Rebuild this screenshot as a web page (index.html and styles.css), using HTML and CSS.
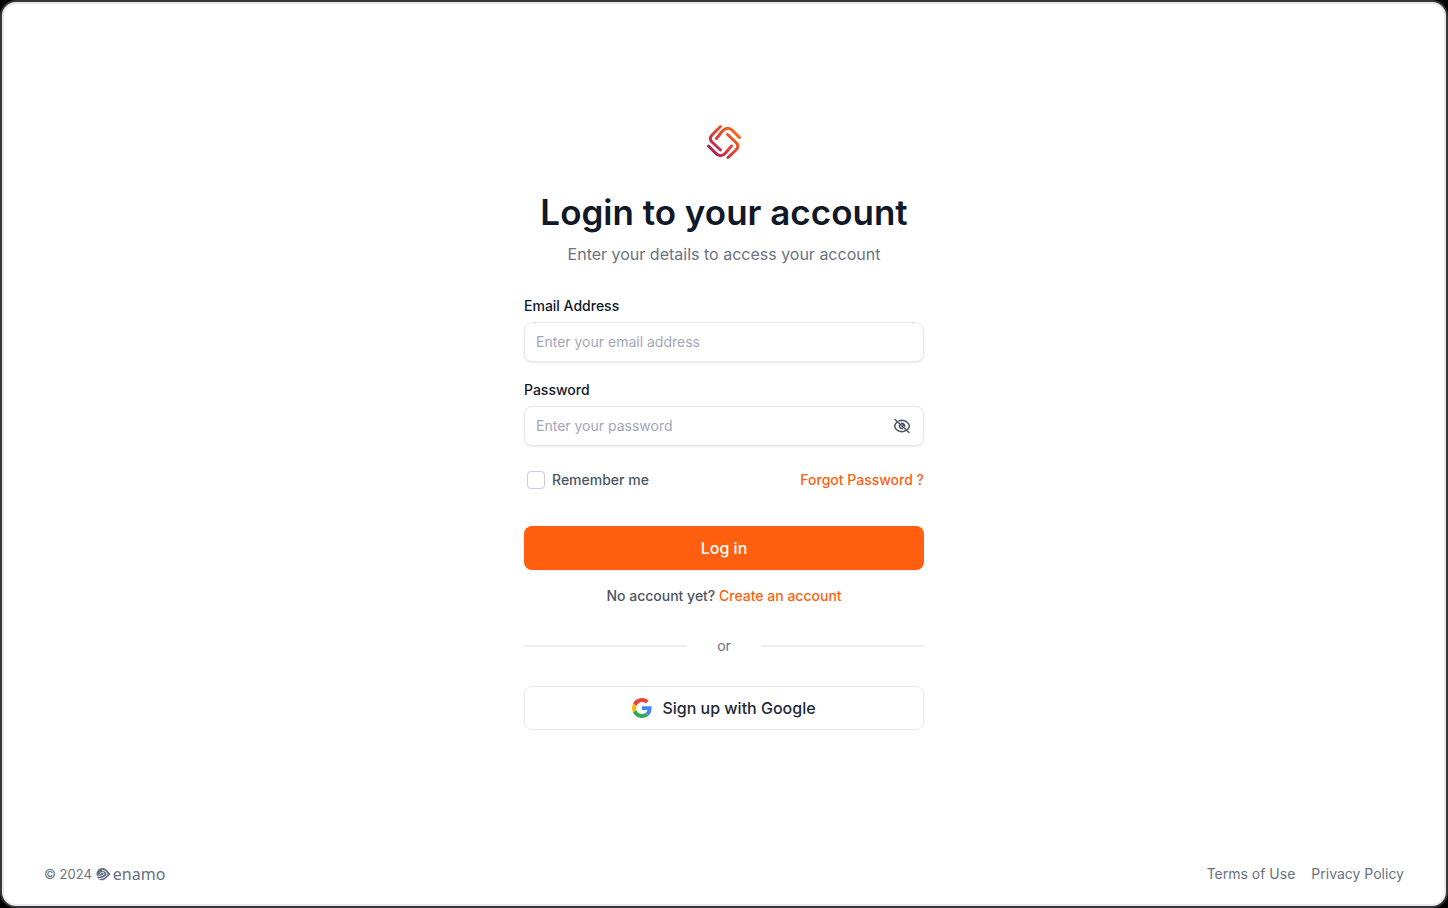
FILE: index.html
```
<!DOCTYPE html>
<html lang="en">
<head>
    <meta charset="UTF-8">
    <meta name="viewport" content="width=device-width, initial-scale=1">
    <title>Login to your account</title>
    <link rel="stylesheet" href="styles.css">
</head>
<body>
<div class="page">
    <main class="login">
        <svg class="logo" viewBox="0 0 40 40" fill="none" stroke="url(#logo-gradient)" stroke-width="3" stroke-linecap="round" stroke-linejoin="round" aria-hidden="true">
            <defs>
                <linearGradient id="logo-gradient" gradientUnits="userSpaceOnUse" x1="6" y1="32" x2="32" y2="8">
                    <stop offset="0" stop-color="#a3195b"/>
                    <stop offset="0.5" stop-color="#dd4238"/>
                    <stop offset="1" stop-color="#ff6610"/>
                </linearGradient>
            </defs>
            <path d="M16.500 4.500 L8 13 Q4.500 16.500 8 20 L16.500 28"/>
            <path d="M12.500 16.500 L18 9.500 Q23.500 3.500 28.500 8.500 L35.500 15.500"/>
            <path d="M23.500 12.500 L31 19.500 Q36.500 24 31.500 28.500 L24 35.500"/>
            <path d="M4.500 24 L11.500 31 Q16.500 36.500 21.500 31 L27.500 24"/>
        </svg>

        <h1>Login to your account</h1>
        <p class="subtitle">Enter your details to access your account</p>

        <form>
            <div class="field">
                <label for="email">Email Address</label>
                <input type="email" id="email" placeholder="Enter your email address">
            </div>

            <div class="field">
                <label for="password">Password</label>
                <div class="password-box">
                    <input type="password" id="password" placeholder="Enter your password">
                    <button type="button" class="toggle" aria-label="Show password">
                        <svg viewBox="0 0 20 20" width="20" height="20" fill="none" stroke="#4b5563" stroke-width="1.5" stroke-linecap="round" stroke-linejoin="round">
                            <path d="M7 5 Q8.400 4.300 10 4.300 C14 4.300 17 7.500 17.500 10 Q17 12 15.500 13.500"/>
                            <path d="M4.800 6.200 Q3 7.900 2.500 10 C3.200 13 6 15.700 10 15.700 Q12 15.700 13.700 14.700"/>
                            <path fill="#4b5563" d="M9.300 7.300 Q12.300 7 12.700 10.300z"/>
                            <path d="M7.400 9.200 Q7.300 12.300 10.500 12.700"/>
                            <path d="M3 3.500 L17 16.500"/>
                        </svg>
                    </button>
                </div>
            </div>

            <div class="options">
                <label class="remember" for="remember"><input type="checkbox" id="remember">Remember me</label>
                <a href="#">Forgot Password ?</a>
            </div>

            <button type="submit" class="btn btn-primary">Log in</button>
        </form>

        <p class="signup">No account yet? <a href="#">Create an account</a></p>

        <div class="divider">or</div>

        <button type="button" class="btn btn-google">
            <svg viewBox="0 0 48 48" width="20" height="20" aria-hidden="true">
                <path fill="#EA4335" d="M24 9.500c3.540 0 6.710 1.220 9.210 3.600l6.850-6.850C35.900 2.380 30.470 0 24 0 14.620 0 6.510 5.380 2.560 13.220l7.980 6.190C12.430 13.720 17.740 9.500 24 9.500z"/>
                <path fill="#4285F4" d="M46.980 24.550c0-1.570-.15-3.090-.38-4.550H24v9.020h12.940c-.58 2.960-2.260 5.480-4.780 7.180l7.730 6c4.510-4.180 7.090-10.360 7.090-17.650z"/>
                <path fill="#FBBC05" d="M10.530 28.590c-.48-1.450-.76-2.990-.76-4.590s.27-3.140.76-4.590l-7.980-6.190C.92 16.460 0 20.120 0 24c0 3.880.92 7.540 2.560 10.780l7.970-6.190z"/>
                <path fill="#34A853" d="M24 48c6.480 0 11.930-2.130 15.890-5.810l-7.730-6c-2.150 1.450-4.920 2.300-8.160 2.300-6.260 0-11.570-4.220-13.470-9.910l-7.980 6.190C6.510 42.620 14.620 48 24 48z"/>
            </svg>
            Sign up with Google
        </button>
    </main>

    <footer>
        <div class="copyright">
            <span>© 2024</span>
            <span class="brand">
                <svg viewBox="0 0 15 14" width="15" height="14" aria-hidden="true">
                    <path fill="#667085" d="M6.500 1 C2.800 1 .5 4 .5 7.200 S3 13.300 6 13.300 C8.500 13.300 9.600 12 14.500 7 C10.500 2.500 9 1 6.500 1z"/>
                    <path fill="none" stroke="#fff" stroke-width="0.9" stroke-linecap="round" d="M0 9 C4.500 9.500 8.300 8.600 8 6.300 C7.500 4.600 4.200 5.200 4 7.200 M3 11.500 C7 12 10 10 11 7 C10.500 5 9 3.500 6.500 3.400"/>
                </svg>
                enamo
            </span>
        </div>
        <nav>
            <a href="#">Terms of Use</a>
            <a href="#">Privacy Policy</a>
        </nav>
    </footer>
</div>
</body>
</html>
```
FILE: styles.css
```
* { box-sizing: border-box; }
body { margin: 0; background-color: #000; font-family: Inter, "Liberation Sans", sans-serif; font-size: 14px; line-height: 20px; color: #111827; }
h1, p { margin: 0; }
a { color: #ff5f0f; font-weight: 500; text-decoration: none; }
input, button { font-family: inherit; }

.page { min-height: 100vh; display: flex; flex-direction: column; border: 2px solid #363636; border-radius: 16px; background-color: #fff; box-shadow: inset 0 0 0 2px #e9e9ed; }

.login { flex: 1; width: 100%; max-width: 400px; margin: 0 auto; padding-top: 120px; display: flex; flex-direction: column; }
.logo { width: 40px; height: 40px; align-self: center; }
h1 { margin-top: 28px; font-size: 35px; line-height: 44px; font-weight: 600; text-align: center; white-space: nowrap; }
.subtitle { margin-top: 8px; font-size: 16px; line-height: 24px; color: #6b7280; text-align: center; }

form { margin-top: 30px; }
.field { margin-bottom: 18px; }
.field label { display: block; margin-bottom: 6px; font-weight: 500; }
.field input { display: block; width: 100%; height: 40px; padding: 0 11px 2px; border: 1px solid #e5e7eb; border-radius: 8px; background-color: #fff; font-size: 14px; color: #111827; box-shadow: 0 1px 2px rgba(0,0,0,0.08); }
.field input::placeholder { color: #a5a6b9; opacity: 1; }
.password-box { position: relative; }
.password-box input { padding-right: 44px; }
.toggle { position: absolute; top: 10px; right: 12px; padding: 0; border: none; background: none; cursor: pointer; }
.toggle svg { display: block; }

.options { display: flex; justify-content: space-between; margin: 24px 0 36px; }
.remember { display: flex; align-items: center; gap: 7px; color: #4b5563; font-weight: 500; }
.remember input { appearance: none; width: 18px; height: 18px; margin: 0 0 0 3px; border: 1px solid #cccbdc; border-radius: 4px; background-color: #fff; }
.remember input:checked { background-color: #ff5f0f; border-color: #ff5f0f; }

.btn { display: flex; align-items: center; justify-content: center; gap: 10px; width: 100%; height: 44px; padding: 0; border-radius: 8px; font-size: 16px; line-height: 24px; font-weight: 500; cursor: pointer; }
.btn-primary { border: none; background-color: #ff5f0f; color: #fff; box-shadow: 0 1px 2px rgba(0,0,0,0.06); }
.btn-google { border: 1px solid #e5e7eb; background-color: #fff; color: #1f2937; }

.signup { margin-top: 16px; color: #4b5563; font-weight: 500; text-align: center; }
.divider { display: flex; align-items: center; gap: 30px; margin: 30px 0; color: #6b7280; }
.divider::before, .divider::after { content: ""; flex: 1; height: 2px; background-color: #f0f0f1; }

footer { display: flex; justify-content: space-between; align-items: center; padding: 20px 42px 22px; color: #6b7280; }
.copyright, .brand { display: flex; align-items: center; gap: 4px; }
.copyright { font-size: 13px; }
.brand { gap: 2px; font-family: "Noto Sans", sans-serif; font-size: 16px; color: #667085; }
nav { display: flex; gap: 16px; }
nav a { color: #6b7280; font-weight: 400; }
```
